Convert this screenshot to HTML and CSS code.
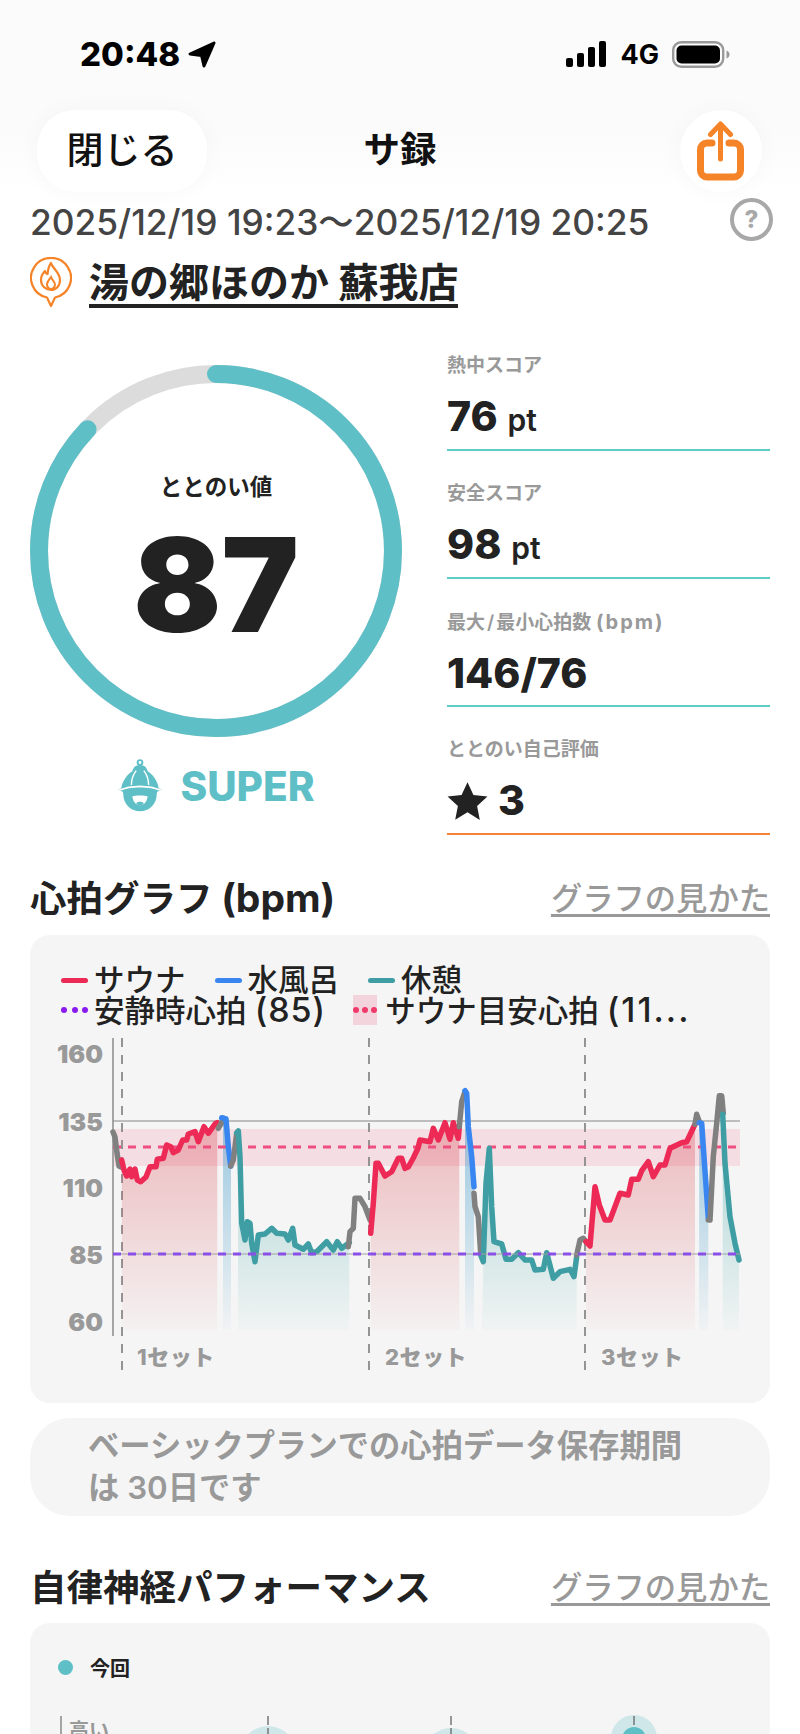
FILE: index.html
```html
<!DOCTYPE html>
<html lang="ja">
<head>
    <meta charset="UTF-8">
    <meta name="viewport" content="width=device-width, initial-scale=1.0">
    <title>サ録</title>
    <link rel="stylesheet" href="styles.css">
</head>
<body>
<div class="page">
    <header class="top">
        <div class="status">
            <div class="status-time">20:48
                <svg class="loc" viewBox="0 0 28 27"><path d="M26 2 2 13l11.500 1.500L16 25z" fill="#000" stroke="#000" stroke-width="3" stroke-linejoin="round"/></svg>
            </div>
            <div class="status-right">
                <svg class="signal" viewBox="0 0 41 26"><rect x="0" y="17" width="7" height="9" rx="2"/><rect x="11" y="12" width="7" height="14" rx="2"/><rect x="22" y="6" width="7" height="20" rx="2"/><rect x="33" y="0" width="7" height="26" rx="2"/></svg>
                <span class="net">4G</span>
                <svg class="battery" viewBox="0 0 58 27"><rect x="1.200" y="1.200" width="50" height="24.600" rx="8" fill="none" stroke="#999" stroke-width="2.400"/><rect x="4.500" y="4.500" width="43.500" height="18" rx="5" fill="#000"/><path d="M54.500 9.500c2 .7 3 2.200 3 4s-1 3.300-3 4z" fill="#999"/></svg>
            </div>
        </div>
        <nav class="nav">
            <button class="btn-close">閉じる</button>
            <div class="nav-title">サ録</div>
            <button class="btn-share">
                <svg class="share-icon" viewBox="0 0 47 60" width="47" height="60"><path d="M15 22H10a6.500 6.500 0 0 0-6.500 6.500v21A6.500 6.500 0 0 0 10 56h27a6.500 6.500 0 0 0 6.500-6.500v-21A6.500 6.500 0 0 0 37 22h-5" fill="none" stroke="#f58328" stroke-width="7" stroke-linecap="round"/><path d="M23.500 38V4M13.500 13.500 23.500 3l10 10.500" fill="none" stroke="#f58328" stroke-width="5" stroke-linecap="round" stroke-linejoin="round"/></svg>
            </button>
        </nav>
    </header>

    <section class="info">
        <div class="date-row">
            <div class="date">2025/12/19 19:23〜2025/12/19 20:25</div>
            <div class="help">?</div>
        </div>
        <div class="venue">
            <svg class="venue-icon" viewBox="0 0 42 50"><path d="M17 40.500 21 49l4-8.500a20 20 0 1 0-8 0z" fill="none" stroke="#f58328" stroke-width="2.200" stroke-linejoin="round"/><path d="M21 6c1 5 9 9 9 17 0 6-4 10-9 10s-10-4-10-10c0-4 2-7 4-9 .5 2 1 3 2.500 3 .5-4 1-8 3.500-11z" fill="none" stroke="#f58328" stroke-width="2.200" stroke-linejoin="round"/><path d="M21 20c1 3 4 4.500 4 7.500 0 2.500-2 4.500-4 4.500s-4-2-4-4.500c0-3 2-4.500 4-7.500z" fill="none" stroke="#f58328" stroke-width="2"/></svg>
            <a class="venue-name">湯の郷ほのか 蘇我店</a>
        </div>
    </section>

    <section class="scores">
        <div class="gauge">
            <div class="ring">
                <svg viewBox="0 0 372 372" width="372" height="372">
                    <circle cx="186" cy="186" r="177" fill="none" stroke="#dcdcdc" stroke-width="18"/>
                    <circle cx="186" cy="186" r="177" fill="none" stroke="#5fbfc7" stroke-width="18" stroke-linecap="round" stroke-dasharray="968 1112" transform="rotate(-90 186 186)"/>
                </svg>
                <div class="ring-text">
                    <div class="ring-label">ととのい値</div>
                    <div class="ring-value">87</div>
                </div>
            </div>
            <div class="rank">
                <svg class="rank-icon" viewBox="0 0 48 56"><circle cx="24" cy="3.500" r="2.500" fill="none" stroke="#5fbfc7" stroke-width="2"/><path d="M24 6c-5 0-7 3-8 6.500C10 16.500 5 23 4 33l20-3 20 3c-1-10-6-16.500-12-20.500C31 9 29 6 24 6z" fill="#5fbfc7"/><path d="M15 27c0-6 2-11 5-15M33 27c0-6-2-11-5-15" fill="none" stroke="#fff" stroke-width="1.500"/><path d="M1 33.500 12 31l12-1 12 1 11 2.500-5 2.500c-.3 1-.6 2-.6 3a17 17 0 1 1-34.800 0c0-1-.3-2-.6-3z" fill="#5fbfc7" transform="translate(0 -2)"/><path d="M0 33 12 29.500l12-1 12 1L48 33" fill="none" stroke="#fff" stroke-width="1.800"/><path d="M16 39c3-1.500 13-1.500 16 0-1 6-4 9-8 9s-7-3-8-9z" fill="#fff"/><path d="M20 46c2-2 6-2 8 0-1 1.500-2.500 2.200-4 2.200s-3-.7-4-2.200z" fill="#5fbfc7"/></svg>
                <span class="rank-text">SUPER</span>
            </div>
        </div>
        <div class="stats">
            <div class="stat">
                <div class="stat-label">熱中スコア</div>
                <div class="stat-value">76<span class="unit">pt</span></div>
            </div>
            <div class="stat">
                <div class="stat-label">安全スコア</div>
                <div class="stat-value">98<span class="unit">pt</span></div>
            </div>
            <div class="stat">
                <div class="stat-label">最大<span class="stat-slash">/</span>最小心拍数 <span class="stat-latin">(bpm)</span></div>
                <div class="stat-value">146/76</div>
            </div>
            <div class="stat stat-self">
                <div class="stat-label">ととのい自己評価</div>
                <div class="stat-value">
                    <svg class="star" viewBox="0 0 38 36"><path d="M19 1l5.500 11.800 13 1.500-9.600 8.900 2.500 12.800L19 29l-11.400 6.800 2.500-12.800L.5 14.300l13-1.500z" fill="#222"/></svg>3
                </div>
            </div>
        </div>
    </section>

    <section class="block">
        <div class="block-head">
            <h2>心拍グラフ <span class="h2-latin">(bpm)</span></h2>
            <a class="how">グラフの見かた</a>
        </div>
        <div class="card hr-card">
            <div class="legend">
                <div class="legend-item"><i class="sw sw-sauna"></i>サウナ</div>
                <div class="legend-item"><i class="sw sw-water"></i>水風呂</div>
                <div class="legend-item"><i class="sw sw-rest"></i>休憩</div>
            </div>
            <div class="legend">
                <div class="legend-item"><i class="dots dots-rest"><b></b><b></b><b></b></i><span>安静時心拍 <span class="legend-latin">(85)</span></span></div>
                <div class="legend-item"><i class="dots dots-target"><b></b><b></b><b></b></i><span>サウナ目安心拍 <span class="legend-latin legend-cut">(11...</span></span></div>
            </div>
            <svg class="hr-chart" viewBox="30 1030 740 350" width="740" height="350">
                <defs>
                    <linearGradient id="gRed" gradientUnits="userSpaceOnUse" x1="0" y1="1120" x2="0" y2="1332"><stop offset="0" stop-color="#d9464f" stop-opacity=".34"/><stop offset="1" stop-color="#d9464f" stop-opacity=".02"/></linearGradient>
                    <linearGradient id="gBlue" gradientUnits="userSpaceOnUse" x1="0" y1="1120" x2="0" y2="1332"><stop offset="0" stop-color="#3f9ac9" stop-opacity=".5"/><stop offset="1" stop-color="#3f9ac9" stop-opacity=".02"/></linearGradient>
                    <linearGradient id="gTeal" gradientUnits="userSpaceOnUse" x1="0" y1="1120" x2="0" y2="1332"><stop offset="0" stop-color="#3fa5a5" stop-opacity=".42"/><stop offset="1" stop-color="#3fa5a5" stop-opacity=".02"/></linearGradient>
                </defs>

                <g class="y-labels">
                    <text x="103" y="1063">160</text>
                    <text x="103" y="1131">135</text>
                    <text x="103" y="1197">110</text>
                    <text x="103" y="1264">85</text>
                    <text x="103" y="1331">60</text>
                </g>
                <g class="x-labels">
                    <text x="137" y="1365">1セット</text>
                    <text x="385" y="1365">2セット</text>
                    <text x="601" y="1365">3セット</text>
                </g>

                <rect x="113" y="1129" width="627" height="37" fill="#ee3b6a" fill-opacity=".13"/>
                <line x1="113" y1="1121" x2="740" y2="1121" stroke="#aaa" stroke-width="1.500"/>
                <line x1="113" y1="1038" x2="113" y2="1336" stroke="#8a8a8a" stroke-width="1.500"/>
                <g stroke="#8a8a8a" stroke-width="1.800" stroke-dasharray="9 8">
                    <line x1="122" y1="1038" x2="122" y2="1373"/>
                    <line x1="369" y1="1038" x2="369" y2="1373"/>
                    <line x1="585" y1="1038" x2="585" y2="1373"/>
                </g>

                <!-- areas under the line -->
                <polygon fill="url(#gRed)" points="122,1330 121.700,1160 124,1170 126.700,1176 130,1169 131.700,1176.700 135,1169 137.300,1180 140.700,1181.700 146,1177 150,1166.700 156,1166.700 157.300,1159.300 163.300,1158.300 166.700,1145 170.700,1146.700 173.300,1152.700 178.300,1150 182.700,1140 186.700,1140 188.300,1134 195,1131.700 198.300,1141.700 204,1126.700 208.300,1133.300 215,1124 217.300,1122.700 217.300,1330"/>
                <polygon fill="url(#gBlue)" points="223,1330 223,1118 226,1119 228.300,1146.700 231,1166 231,1330"/>
                <polygon fill="url(#gTeal)" points="238,1330 238.300,1131 240,1156.700 241.700,1223.300 245,1240 247.300,1221.700 250,1223.300 251.700,1243.300 255,1261.700 258.300,1235 265,1234 271.700,1228.300 276.700,1233.300 285,1234 288.300,1240 292.700,1228.300 295,1245 303.300,1249.300 308.300,1244 311.700,1252.700 316.700,1251.700 326.700,1241.700 333.300,1250 337.300,1241.700 341.700,1248.300 349.300,1242.700 349.300,1330"/>
                <polygon fill="url(#gRed)" points="370.700,1330 370.700,1233.300 373.300,1203.300 376,1163.300 378.300,1163.300 385,1176 391.700,1171.700 398.300,1158.300 401.700,1158.300 405,1168.300 408.300,1167 413.300,1158 418,1148 420,1140 430,1141.700 433.300,1128.300 438.300,1140 445,1122.700 450,1139.300 453.300,1122.700 458.300,1138.300 459.300,1126.700 459.300,1330"/>
                <polygon fill="url(#gBlue)" points="465,1330 465,1091 466.700,1093.300 468.300,1126.700 471.700,1156.700 474,1186.700 474,1330"/>
                <polygon fill="url(#gTeal)" points="482,1330 483.300,1261.700 486,1183.300 489.300,1148.300 491.700,1206.700 494,1241.700 501.700,1244 506,1259.300 511.700,1259.300 518.300,1252.700 525,1260 531.700,1260 535,1270 543.300,1269.300 546.700,1252.700 553.300,1278.300 560,1271.700 570,1269.300 574,1276.700 576.700,1256.700 576.700,1330"/>
                <polygon fill="url(#gRed)" points="586,1330 586,1241.700 590,1246 595,1186.700 599.300,1205 605,1220 610,1220 620,1193.300 628.300,1195 631.700,1179.300 638.300,1179.300 641.700,1170.700 648.300,1161.700 653.300,1176.700 660,1165 665,1165 670,1148.300 681.700,1142.700 686.700,1141.700 695,1124.300 695,1330"/>
                <polygon fill="url(#gBlue)" points="699,1330 699.300,1122.700 701.700,1123.300 704,1156.700 708.300,1218.300 708.300,1330"/>
                <polygon fill="url(#gTeal)" points="722.700,1330 722.700,1114.300 725,1163.300 730,1216.700 735,1243.300 739,1260 739,1330"/>

                <line x1="113" y1="1147" x2="740" y2="1147" stroke="#ee4f80" stroke-width="3" stroke-dasharray="8 7"/>

                <!-- heart rate line -->
                <g class="hr-line">
                    <polyline stroke="#808080" points="113,1132 115,1137 117,1153 119,1166 121,1167"/>
                    <polyline stroke="#ec2a55" points="121.700,1160 124,1170 126.700,1176 130,1169 131.700,1176.700 135,1169 137.300,1180 140.700,1181.700 146,1177 150,1166.700 156,1166.700 157.300,1159.300 163.300,1158.300 166.700,1145 170.700,1146.700 173.300,1152.700 178.300,1150 182.700,1140 186.700,1140 188.300,1134 195,1131.700 198.300,1141.700 204,1126.700 208.300,1133.300 215,1124 217.300,1122.700"/>
                    <polyline stroke="#808080" points="218.300,1128.300 221.700,1122.700 223.300,1118.300"/>
                    <polyline stroke="#3a86f0" points="221.700,1117.700 226,1119 228.300,1146.700 230.700,1166"/>
                    <polyline stroke="#808080" points="230.700,1166 233.300,1160 236.700,1133.300"/>
                    <polyline stroke="#3f9ea3" points="236.700,1133 238.300,1131 240,1156.700 241.700,1223.300 245,1240 247.300,1221.700 250,1223.300 251.700,1243.300 255,1261.700 258.300,1235 265,1234 271.700,1228.300 276.700,1233.300 285,1234 288.300,1240 292.700,1228.300 295,1245 303.300,1249.300 308.300,1244 311.700,1252.700 316.700,1251.700 326.700,1241.700 333.300,1250 337.300,1241.700 341.700,1248.300 349.300,1242.700"/>
                    <polyline stroke="#808080" points="348.300,1246.700 350,1231.700 353.300,1228.300 355,1198.300 360,1198.300 365,1206.700 370,1220"/>
                    <polyline stroke="#ec2a55" points="370.700,1233.300 373.300,1203.300 376,1163.300 378.300,1163.300 385,1176 391.700,1171.700 398.300,1158.300 401.700,1158.300 405,1168.300 408.300,1167 413.300,1158 418,1148 420,1140 430,1141.700 433.300,1128.300 438.300,1140 445,1122.700 450,1139.300 453.300,1122.700 458.300,1138.300 459.300,1126.700"/>
                    <polyline stroke="#808080" points="459.300,1126.700 461.700,1101.700 465,1091.700"/>
                    <polyline stroke="#3a86f0" points="465,1090.700 466.700,1093.300 468.300,1126.700 471.700,1156.700 474,1186.700"/>
                    <polyline stroke="#808080" points="474,1193.300 475,1206.700 478.300,1216.700 480.700,1253.300"/>
                    <polyline stroke="#3f9ea3" points="480.700,1255 483.300,1261.700 486,1183.300 489.300,1148.300 491.700,1206.700 494,1241.700 501.700,1244 506,1259.300 511.700,1259.300 518.300,1252.700 525,1260 531.700,1260 535,1270 543.300,1269.300 546.700,1252.700 553.300,1278.300 560,1271.700 570,1269.300 574,1276.700 576.700,1256.700"/>
                    <polyline stroke="#808080" points="576.700,1255 580,1240 583.300,1238.300 586,1241.700"/>
                    <polyline stroke="#ec2a55" points="586,1241.700 590,1246 595,1186.700 599.300,1205 605,1220 610,1220 620,1193.300 628.300,1195 631.700,1179.300 638.300,1179.300 641.700,1170.700 648.300,1161.700 653.300,1176.700 660,1165 665,1165 670,1148.300 681.700,1142.700 686.700,1141.700 695,1124.300"/>
                    <polyline stroke="#808080" points="695,1124.300 696.700,1114.300 699.300,1121.700"/>
                    <polyline stroke="#3a86f0" points="699.300,1122.700 701.700,1123.300 704,1156.700 708.300,1218.300"/>
                    <polyline stroke="#808080" points="708.300,1220 710,1220 713.300,1156.700 716.700,1123.300 719.300,1095.700 721.700,1095.700 723.300,1113.300"/>
                    <polyline stroke="#3f9ea3" points="722.700,1114.300 725,1163.300 730,1216.700 735,1243.300 739,1260"/>
                </g>

                <line x1="113" y1="1254" x2="740" y2="1254" stroke="#a0a0a0" stroke-width="1"/>
                <line x1="113" y1="1254" x2="740" y2="1254" stroke="#8a4fe6" stroke-width="3" stroke-dasharray="8 7"/>
            </svg>
        </div>
        <div class="note">ベーシックプランでの心拍データ保存期間<br>は 30日です</div>
    </section>

    <section class="block block-ans">
        <div class="block-head">
            <h2>自律神経パフォーマンス</h2>
            <a class="how">グラフの見かた</a>
        </div>
        <div class="card ans-card">
            <div class="ans-legend"><i class="ans-dot"></i>今回</div>
            <svg class="ans-chart" viewBox="30 1700 740 34" width="740" height="34">
                <line x1="61" y1="1716" x2="61" y2="1734" stroke="#888" stroke-width="1.500"/>
                <text class="ans-y" x="69" y="1738">高い</text>
                <circle cx="268" cy="1754" r="28" fill="#5fbfc7" fill-opacity=".25"/>
                <circle cx="451" cy="1756" r="28" fill="#5fbfc7" fill-opacity=".25"/>
                <circle cx="634" cy="1738" r="23" fill="#5fbfc7" fill-opacity=".25"/>
                <circle cx="634" cy="1739" r="12" fill="#5fbfc7"/>
                <g stroke="#777" stroke-width="1.500" stroke-dasharray="9 3 40">
                    <line x1="268" y1="1716" x2="268" y2="1734"/>
                    <line x1="451" y1="1716" x2="451" y2="1734"/>
                    <line x1="634" y1="1716" x2="634" y2="1725"/>
                </g>
            </svg>
        </div>
    </section>
</div>
</body>
</html>
```

FILE: styles.css
```css
* {
    box-sizing: border-box;
}
html, body {
    margin: 0;
    padding: 0;
    background: #fff;
}
body {
    font-family: Inter, "Noto Sans CJK JP", sans-serif;
    color: #222;
}
.page {
    width: 800px;
    height: 1734px;
    overflow: hidden;
}
.top {
    height: 192px;
    padding-top: 32px;
    background: linear-gradient(#fbfbfb 70%, #fff);
}
.status {
    display: flex;
    justify-content: space-between;
    align-items: center;
    height: 44px;
    padding: 0 70px 0 80px;
}
.status-time {
    display: flex;
    align-items: center;
    gap: 8px;
    font-size: 33px;
    font-weight: 800;
    color: #000;
}
.loc {
    width: 28px;
    height: 27px;
}
.status-right {
    display: flex;
    align-items: center;
    gap: 13px;
}
.signal {
    width: 41px;
    height: 26px;
}
.net {
    font-size: 27px;
    font-weight: 700;
    color: #000;
}
.battery {
    width: 58px;
    height: 27px;
}
.nav {
    position: relative;
    display: flex;
    justify-content: space-between;
    align-items: center;
    height: 82px;
    margin-top: 34px;
    padding: 0 38px 0 37px;
}
.btn-close {
    width: 170px;
    height: 82px;
    padding: 0 0 6px;
    border: none;
    border-radius: 38px;
    background: #fff;
    box-shadow: 0 0 24px rgba(0, 0, 0, .03);
    font-family: inherit;
    font-size: 37px;
    font-weight: 500;
    color: #111;
}
.nav-title {
    position: absolute;
    left: 0;
    right: 0;
    padding-bottom: 8px;
    text-align: center;
    font-size: 36.500px;
    font-weight: 700;
    color: #111;
    pointer-events: none;
}
.btn-share {
    display: flex;
    align-items: center;
    justify-content: center;
    width: 82px;
    height: 82px;
    padding: 0;
    border: none;
    border-radius: 50%;
    background: #fff;
    box-shadow: 0 0 24px rgba(0, 0, 0, .03);
}
.share-icon {
    margin-right: 2px;
}
.info {
    padding: 0 27px 0 30px;
}
.date-row {
    display: flex;
    justify-content: space-between;
    align-items: center;
    height: 58px;
    padding-bottom: 3px;
}
.date {
    font-size: 35.300px;
    font-weight: 500;
    color: #444;
    white-space: nowrap;
}
.help {
    width: 43px;
    height: 43px;
    border: 4px solid #a8a8a8;
    border-radius: 50%;
    text-align: center;
    font-size: 24px;
    line-height: 35px;
    font-weight: 800;
    color: #a8a8a8;
}
.venue {
    display: flex;
    align-items: center;
    gap: 17px;
    height: 50px;
    margin-top: 7px;
}
.venue-icon {
    width: 42px;
    height: 50px;
}
.venue-name {
    height: 46px;
    margin-top: 6px;
    font-size: 40px;
    line-height: 42px;
    font-weight: 700;
    color: #222;
    border-bottom: 4px solid #222;
    white-space: nowrap;
}
.scores {
    display: flex;
    justify-content: space-between;
    margin-top: 16px;
    padding: 0 30px;
}
.gauge {
    width: 372px;
    padding-top: 42px;
}
.ring {
    position: relative;
    width: 372px;
    height: 372px;
}
.ring svg {
    display: block;
}
.ring-text {
    position: absolute;
    inset: 0;
    display: flex;
    flex-direction: column;
    align-items: center;
}
.ring-label {
    margin-top: 104px;
    font-size: 22.500px;
    font-weight: 700;
}
.ring-value {
    margin-top: 19px;
    font-size: 130px;
    line-height: 130px;
    font-weight: 900;
}
.rank {
    display: flex;
    align-items: center;
    justify-content: center;
    gap: 17px;
    margin-top: 22px;
}
.rank-icon {
    width: 46px;
    height: 54px;
}
.rank-text {
    font-size: 40.500px;
    font-weight: 800;
    color: #5fbfc7;
}
.stats {
    width: 323px;
}
.stat {
    height: 128px;
    padding-top: 30px;
    border-bottom: 2px solid #5ecbc6;
}
.stat-self {
    border-bottom-color: #f58235;
}
.stat-label {
    font-size: 19px;
    line-height: 26px;
    font-weight: 600;
    color: #999;
    white-space: nowrap;
}
.stat-slash {
    padding: 0 2px;
}
.stat-latin {
    font-size: 20px;
    font-weight: 700;
    letter-spacing: 2px;
}
.stat-value {
    display: flex;
    align-items: baseline;
    margin-top: 13px;
    font-size: 41px;
    line-height: 48px;
    font-weight: 800;
    color: #222;
}
.unit {
    margin-left: 10px;
    font-size: 30px;
    font-weight: 600;
}
.star {
    align-self: center;
    width: 41px;
    height: 39px;
    margin-right: 10px;
}
.block {
    padding: 0 30px;
    margin-top: 37px;
}
.block-ans {
    margin-top: 45px;
}
.block-head {
    display: flex;
    justify-content: space-between;
    align-items: center;
    height: 48px;
}
h2 {
    margin: 0;
    font-size: 36.500px;
    font-weight: 700;
    color: #222;
}
.h2-latin {
    font-size: 39px;
}
.how {
    font-size: 31.300px;
    font-weight: 500;
    color: #999;
    text-decoration: underline;
    text-underline-offset: 4px;
}
.card {
    background: #f5f5f5;
    border-radius: 20px;
}
.hr-card {
    height: 468px;
    margin-top: 15px;
    padding-top: 30px;
    overflow: hidden;
}
.legend {
    display: flex;
    gap: 29px;
    height: 30px;
    padding-left: 31px;
    font-size: 30.500px;
    line-height: 30px;
    font-weight: 500;
    white-space: nowrap;
}
.legend-latin {
    font-size: 34px;
    letter-spacing: 1px;
}
.legend-cut {
    letter-spacing: 2px;
}
.legend-item {
    display: flex;
    align-items: center;
    gap: 6px;
}
.sw {
    width: 27px;
    height: 5px;
    border-radius: 3px;
}
.sw-sauna {
    background: #ec2a55;
}
.sw-water {
    background: #3a86f0;
}
.sw-rest {
    background: #3f9ea3;
}
.dots {
    display: flex;
    align-items: center;
    justify-content: space-between;
    width: 27px;
    height: 30px;
}
.dots b {
    width: 6px;
    height: 6px;
    border-radius: 50%;
}
.dots-rest b {
    background: #8a1cf0;
}
.dots-target {
    width: 24px;
    margin-left: -2px;
    margin-right: 2px;
    background: #f3d3dc;
}
.dots-target b {
    background: #ee3b6a;
}
.hr-chart {
    display: block;
    margin-top: 5px;
}
.hr-line polyline {
    fill: none;
    stroke-width: 5.500;
    stroke-linejoin: round;
    stroke-linecap: round;
}
.y-labels text {
    font-size: 25px;
    font-weight: 900;
    fill: #999;
    text-anchor: end;
}
.x-labels text {
    font-size: 22px;
    font-weight: 800;
    letter-spacing: .5px;
    fill: #999;
}
.note {
    height: 98px;
    margin-top: 15px;
    padding: 7px 58px;
    background: #f5f5f5;
    border-radius: 40px;
    font-size: 31.300px;
    line-height: 42px;
    font-weight: 600;
    color: #999;
    white-space: nowrap;
}
.ans-card {
    height: 200px;
    margin-top: 14px;
    padding-top: 29px;
}
.ans-legend {
    display: flex;
    align-items: center;
    gap: 17px;
    height: 30px;
    padding-left: 28px;
    font-size: 20px;
    font-weight: 700;
}
.ans-dot {
    width: 15px;
    height: 15px;
    border-radius: 50%;
    background: #5fbfc7;
}
.ans-chart {
    display: block;
    margin-top: 18px;
    overflow: hidden;
}
.ans-y {
    font-size: 20px;
    font-weight: 700;
    fill: #999;
}
```
